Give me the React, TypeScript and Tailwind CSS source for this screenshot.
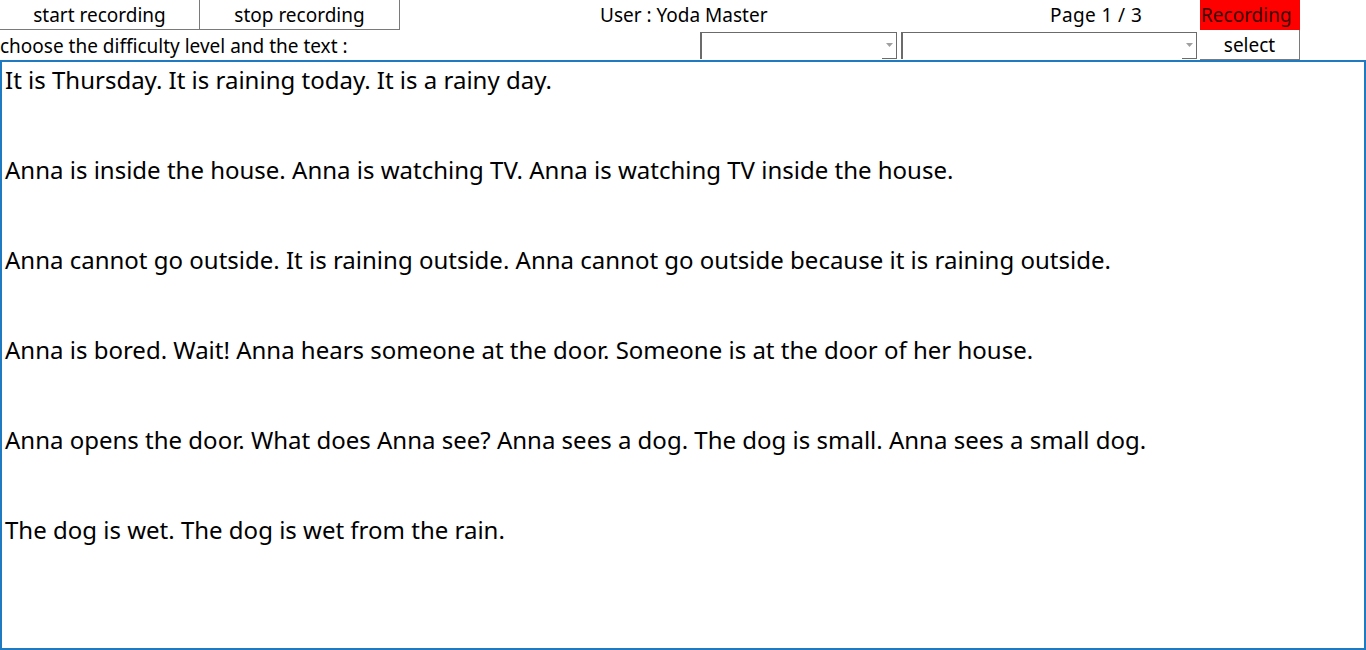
const lines = [
  "It is Thursday. It is raining today. It is a rainy day.",
  "Anna is inside the house. Anna is watching TV. Anna is watching TV inside the house.",
  "Anna cannot go outside. It is raining outside. Anna cannot go outside because it is raining outside.",
  "Anna is bored. Wait! Anna hears someone at the door. Someone is at the door of her house.",
  "Anna opens the door. What does Anna see? Anna sees a dog. The dog is small. Anna sees a small dog.",
  "The dog is wet. The dog is wet from the rain.",
];

function Select({ width }: { width: string }) {
  return (
    <div className={`relative h-[27px] ${width} border-l-2 border-t border-[#6b6b6b] bg-white`}>
      <div className="absolute right-0 top-0 h-full w-[15px] border-r border-b border-[#6b6b6b]">
        <svg className="absolute left-[4px] top-[10px]" width="7" height="4" viewBox="0 0 7 4">
          <path d="M0 0h7L3.5 4z" fill="#a0a0a0" />
        </svg>
      </div>
    </div>
  );
}

export default function App() {
  return (
    <div className="h-[650px] w-[1366px] overflow-hidden bg-white text-black font-['Noto_Sans',sans-serif]">
      {/* top bar */}
      <div className="flex h-[30px] items-stretch text-[19px] leading-[30px]">
        <button className="w-[200px] border-r border-b border-[#7a7a7a] bg-white text-center">start recording</button>
        <button className="w-[200px] border-r border-b border-[#7a7a7a] bg-white text-center">stop recording</button>
        <div className="w-[200px]" />
        <div className="w-[400px]">User : Yoda Master</div>
        <div className="w-[200px] pl-[50px] tracking-[0.4px]">Page 1 / 3</div>
        <div className="w-[100px] bg-[#ff0000] pl-px text-[#3b0000]">Recording</div>
      </div>

      {/* second row */}
      <div className="flex h-[30px] items-stretch text-[19px] leading-[30px]">
        <div className="w-[700px] leading-[32px]">choose the difficulty level and the text :</div>
        <div className="flex w-[500px] items-center gap-[4px] pt-[1px]">
          <Select width="w-[197px]" />
          <Select width="w-[296px]" />
        </div>
        <button className="w-[100px] border-r border-b border-[#7a7a7a] bg-white text-center">select</button>
      </div>

      {/* text area */}
      <div className="h-[590px] border-2 border-[#1f7ac2] px-[3px] pt-[3px] text-[24px] leading-[30px]">
        <div className="flex flex-col gap-[60px]">
          {lines.map((l, i) => (
            <p key={i}>{l}</p>
          ))}
        </div>
      </div>
    </div>
  );
}
